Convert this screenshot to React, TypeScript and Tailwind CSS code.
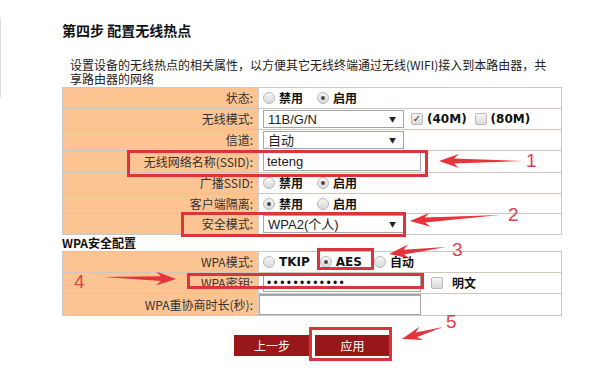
import React from "react";

const CJK = "font-['Noto_Sans_CJK_SC','Noto_Sans',sans-serif]";

function Radio({ checked }: { checked?: boolean }) {
  return (
    <span className="relative inline-block w-[12px] h-[12px] rounded-full border border-[#b9b9b9] bg-gradient-to-b from-[#f6f6f6] to-[#d9d9d9] align-middle">
      {checked && (
        <span className="absolute left-[3px] top-[3px] w-[4px] h-[4px] rounded-full bg-[#4a4a4a]" />
      )}
    </span>
  );
}

function Check({ checked }: { checked?: boolean }) {
  return (
    <span className="relative inline-flex items-center justify-center w-[12px] h-[12px] rounded-[2px] border border-[#b9b9b9] bg-gradient-to-b from-[#f6f6f6] to-[#dadada]">
      {checked && <span className="text-[10px] leading-none text-[#333] font-bold">✓</span>}
    </span>
  );
}

function Select({ text }: { text: string }) {
  return (
    <div className="w-[141px] h-[18px] border border-[#a6a6a6] bg-white flex items-center justify-between pl-[4px] pr-[7px]">
      <span className="text-[13px] leading-none text-[#222] font-['Liberation_Sans','Noto_Sans_CJK_SC',sans-serif]">{text}</span>
      <span className="text-[7px] leading-none text-[#222]">▼</span>
    </div>
  );
}

function RadioPair({ first }: { first: boolean }) {
  return (
    <div className="flex items-center gap-[4px] text-[12px] font-bold text-[#111]">
      <Radio checked={first} />
      <span className="mr-[10px]">禁用</span>
      <Radio checked={!first} />
      <span>启用</span>
    </div>
  );
}

function Row({ label, children, last, h = "h-[21px]" }: { label: string; children?: React.ReactNode; last?: boolean; h?: string }) {
  return (
    <div className={`grid grid-cols-[196px_1fr] ${h} ${last ? "" : "border-b border-[#d2c6bc]"}`}>
      <div className="bg-[#fcc492] flex items-center justify-end pr-[5px] text-[12px] text-[#333] border-r border-[#d0d0d0]">
        {label}
      </div>
      <div className="bg-white flex items-center pl-[4px]">{children}</div>
    </div>
  );
}

function Arrow({ x1, y1, x2, y2 }: { x1: number; y1: number; x2: number; y2: number }) {
  const dx = x2 - x1;
  const dy = y2 - y1;
  const len = Math.sqrt(dx * dx + dy * dy);
  const ux = dx / len;
  const uy = dy / len;
  const px = -uy;
  const py = ux;
  const headLen = 20;
  const bx = x2 - ux * headLen;
  const by = y2 - uy * headLen;
  const nx = x2 - ux * (headLen - 5);
  const ny = y2 - uy * (headLen - 5);
  const pts = [
    [x2, y2],
    [bx + px * 7, by + py * 7],
    [nx + px * 2.4, ny + py * 2.4],
    [x1, y1],
    [nx - px * 2.4, ny - py * 2.4],
    [bx - px * 7, by - py * 7],
  ]
    .map((p) => p.join(","))
    .join(" ");
  return <polygon points={pts} fill="#e6343c" />;
}

export default function App() {
  return (
    <div className={`relative w-[600px] h-[375px] bg-white overflow-hidden ${CJK}`}>
      <div className="absolute left-0 top-[18px] w-[1px] h-[80px] bg-[#dedede]" />
      <div className="pl-[62px] pt-[21px] w-[562px]">
        <div className="text-[14px] font-bold text-[#111] leading-[18px]">第四步 配置无线热点</div>
        <div className="mt-[19px] pl-[8px] pr-[10px] text-[12px] leading-[14px] text-[#222] h-[28px]">
          设置设备的无线热点的相关属性，以方便其它无线终端通过无线(WIFI)接入到本路由器，共享路由器的网络
        </div>
        <div className="mt-[1px] border border-[#c8c8c8]">
          <Row label="状态:">
            <RadioPair first={false} />
          </Row>
          <Row label="无线模式:">
            <Select text="11B/G/N" />
            <div className="ml-[7px] flex items-center gap-[4px] text-[12px] font-bold text-[#111] font-['DejaVu_Sans',sans-serif]">
              <Check checked />
              <span className="mr-[4px]">(40M)</span>
              <Check />
              <span>(80M)</span>
            </div>
          </Row>
          <Row label="信道:">
            <Select text="自动" />
          </Row>
          <Row label="无线网络名称(SSID):" h="h-[22px]">
            <div className="w-[158px] h-[19px] border border-[#a6a6a6] flex items-center pl-[3px] text-[13px] text-[#222] font-['Liberation_Sans',sans-serif]">
              teteng
            </div>
          </Row>
          <Row label="广播SSID:">
            <RadioPair first={false} />
          </Row>
          <Row label="客户端隔离:" h="h-[20px]">
            <RadioPair first={true} />
          </Row>
          <Row label="安全模式:" last h="h-[20px]">
            <Select text="WPA2(个人)" />
          </Row>
        </div>
        <div className="h-[16px] flex items-center text-[12px] font-bold text-[#111]">WPA安全配置</div>
        <div className="border border-[#c8c8c8]">
          <Row label="WPA模式:">
            <div className="flex items-center gap-[4px] text-[12px] font-bold text-[#111]">
              <Radio />
              <span className="mr-[6px] font-['DejaVu_Sans',sans-serif]">TKIP</span>
              <Radio checked />
              <span className="mr-[8px] font-['DejaVu_Sans',sans-serif]">AES</span>
              <Radio />
              <span>自动</span>
            </div>
          </Row>
          <Row label="WPA密钥:">
            <div className="w-[158px] h-[17px] border border-[#a6a6a6] flex items-center pl-[3px] text-[12px] tracking-[2.4px] text-[#111] font-['Liberation_Sans',sans-serif]">
              ••••••••••••
            </div>
            <div className="ml-[10px] flex items-center gap-[9px] text-[12px] font-bold text-[#111]">
              <Check />
              <span>明文</span>
            </div>
          </Row>
          <Row label="WPA重协商时长(秒):" last>
            <div className="w-[162px] h-[21px] border border-[#a6a6a6] border-t-2 -ml-[4px]" />
          </Row>
        </div>
        <div className="mt-[19px] flex pl-[172px] gap-[5px]">
          <div className="w-[76px] h-[21px] bg-[#9a1719] text-white text-[12px] flex items-center justify-center">上一步</div>
          <div className="w-[75px] h-[21px] bg-[#9a1719] text-white text-[12px] flex items-center justify-center">应用</div>
        </div>
      </div>

      {/* annotation boxes */}
      <div className="absolute left-[127px] top-[150px] w-[301px] h-[27px] border-[3px] border-[#d9363b]" />
      <div className="absolute left-[181px] top-[212px] w-[225px] h-[25px] border-[3px] border-[#d9363b]" />
      <div className="absolute left-[317px] top-[248px] w-[57px] h-[22px] border-[3px] border-[#d9363b]" />
      <div className="absolute left-[187px] top-[273px] w-[237px] h-[16px] border-[3px] border-[#d9363b]" />
      <div className="absolute left-[309px] top-[327px] w-[83px] h-[34px] border-[3px] border-[#d9363b]" />

      <svg className="absolute left-0 top-0 pointer-events-none" width="600" height="375">
        <Arrow x1={522} y1={161} x2={439} y2={161} />
        <Arrow x1={500} y1={215} x2={410} y2={221} />
        <Arrow x1={446} y1={247} x2={389} y2={254} />
        <Arrow x1={103} y1={277} x2={176} y2={279} />
        <Arrow x1={443} y1={327} x2={402} y2={339} />
      </svg>

      <div className="absolute left-[526px] top-[150px] text-[19px] leading-[22px] text-[#e0404a] font-['Liberation_Sans',sans-serif]">1</div>
      <div className="absolute left-[508px] top-[204px] text-[19px] leading-[22px] text-[#e0404a] font-['Liberation_Sans',sans-serif]">2</div>
      <div className="absolute left-[452px] top-[239px] text-[19px] leading-[22px] text-[#e0404a] font-['Liberation_Sans',sans-serif]">3</div>
      <div className="absolute left-[74px] top-[271px] text-[19px] leading-[22px] text-[#e0404a] font-['Liberation_Sans',sans-serif]">4</div>
      <div className="absolute left-[446px] top-[311px] text-[19px] leading-[22px] text-[#e0404a] font-['Liberation_Sans',sans-serif]">5</div>
    </div>
  );
}
